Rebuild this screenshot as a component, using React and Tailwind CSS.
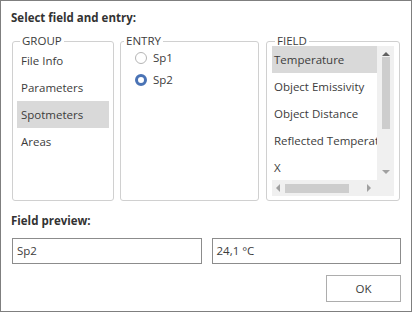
import React from "react";

const font = { fontFamily: '"Open Sans", "Noto Sans", sans-serif' };

function Legend({ children }) {
  return (
    <legend className="ml-[3px] px-[2px] text-[11.5px] leading-[12px] text-[#3c3c3c]">{children}</legend>
  );
}

function Radio({ checked, label }) {
  return (
    <div className="flex h-[22px] items-center">
      <span
        className={
          checked
            ? "ml-[14px] mr-[6px] box-border h-[12px] w-[12px] rounded-full border-[3px] border-[#4a73b5] bg-white"
            : "ml-[14px] mr-[6px] box-border h-[12px] w-[12px] rounded-full border border-[#b5b5b5] bg-white"
        }
      />
      <span className="text-[11.5px] text-[#3c3c3c]">{label}</span>
    </div>
  );
}

export default function App() {
  const groups = ["File Info", "Parameters", "Spotmeters", "Areas"];
  const fields = ["Temperature", "Object Emissivity", "Object Distance", "Reflected Temperature", "X"];
  return (
    <div style={font} className="box-border flex h-[312px] w-[412px] flex-col border border-[#7f7f7f] bg-white px-[10px] text-[#3c3c3c]">
      <div className="mt-[9px] h-[16px] text-[11.5px] font-bold leading-[16px] text-[#333]">Select field and entry:</div>
      <div className="mt-[9px] flex h-[166px]">
        <fieldset className="ml-[1px] box-border w-[102px] min-w-0 shrink-0 rounded-[3px] border border-[#d0d0d0] px-[4px]">
          <Legend>GROUP</Legend>
          {groups.map((g) => (
            <div
              key={g}
              className={
                "flex h-[27px] items-center pl-[4px] text-[11.5px] " +
                (g === "Spotmeters" ? "bg-[#d9d9d9]" : "")
              }
            >
              {g}
            </div>
          ))}
        </fieldset>
        <fieldset className="ml-[6px] box-border w-[139px] min-w-0 shrink-0 rounded-[3px] border border-[#d0d0d0]">
          <Legend>ENTRY</Legend>
          <Radio label="Sp1" />
          <Radio label="Sp2" checked />
        </fieldset>
        <fieldset className="ml-[7px] box-border w-[134px] min-w-0 shrink-0 rounded-[3px] border border-[#d0d0d0] pl-[5px] pr-[4px]">
          <Legend>FIELD</Legend>
          <div className="-mt-[1px] flex h-[150px] w-[122px] flex-col">
            <div className="flex h-[134px]">
              <div className="min-w-0 flex-1 overflow-hidden">
                {fields.map((f, i) => (
                  <div
                    key={f}
                    className={
                      "flex h-[27px] items-center whitespace-nowrap pl-[2px] text-[11.5px] " +
                      (i === 0 ? "bg-[#d9d9d9]" : "")
                    }
                  >
                    {f}
                  </div>
                ))}
              </div>
              <div className="flex w-[17px] shrink-0 flex-col items-center bg-[#f0f0f0]">
                <div className="flex h-[10px] items-end justify-center">
                  <div className="h-0 w-0 border-x-[4px] border-b-[4px] border-x-transparent border-b-[#606060]" />
                </div>
                <div className="mt-[1px] h-[72px] w-[8px] bg-[#cdcdcd]" />
                <div className="flex-1" />
                <div className="mb-[6px] h-0 w-0 border-x-[4px] border-t-[4px] border-x-transparent border-t-[#a0a0a0]" />
              </div>
            </div>
            <div className="flex h-[16px] bg-[#f0f0f0]">
              <div className="flex flex-1 items-center">
                <div className="ml-[4px] h-0 w-0 border-y-[4px] border-r-[4px] border-y-transparent border-r-[#a0a0a0]" />
                <div className="ml-[5px] h-[9px] w-[64px] bg-[#cdcdcd]" />
                <div className="flex-1" />
                <div className="mr-[6px] h-0 w-0 border-y-[4px] border-l-[4px] border-y-transparent border-l-[#a0a0a0]" />
              </div>
              <div className="w-[17px]" />
            </div>
          </div>
        </fieldset>
      </div>
      <div className="mt-[12px] h-[16px] text-[11.5px] font-bold leading-[16px] text-[#333]">Field preview:</div>
      <div className="mt-[9px] flex gap-[10px] pl-[1px]">
        <div className="box-border flex h-[26px] w-[190px] items-center border border-[#8c8c8c] pl-[4px] text-[11.5px]">Sp2</div>
        <div className="box-border flex h-[26px] w-[190px] items-center border border-[#8c8c8c] pl-[4px] text-[11.5px]">24,1 °C</div>
      </div>
      <div className="mt-[11px] flex justify-end">
        <div className="box-border flex h-[27px] w-[75px] items-center justify-center border border-[#adadad] bg-white text-[11.5px]">OK</div>
      </div>
    </div>
  );
}
